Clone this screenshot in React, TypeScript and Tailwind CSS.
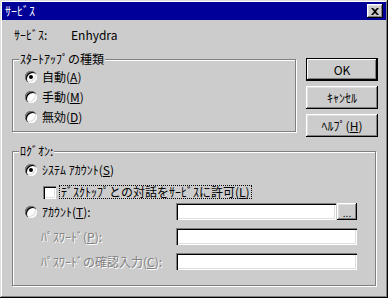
const sunken =
  'shadow-[inset_1px_1px_#808080,inset_2px_2px_#000,inset_-1px_-1px_#fff,inset_-2px_-2px_#dfdfdf]';
const raised =
  'shadow-[inset_-1px_-1px_#000,inset_1px_1px_#fff,inset_-2px_-2px_#808080,inset_2px_2px_#dfdfdf]';

function Radio({ checked }: { checked?: boolean }) {
  return (
    <span
      className={`relative flex w-[12px] h-[12px] shrink-0 items-center justify-center rounded-full bg-white ${sunken}`}
    >
      {checked && <span className="w-[4px] h-[4px] rounded-full bg-black" />}
    </span>
  );
}

function Button({ children, isDefault }: { children: React.ReactNode; isDefault?: boolean }) {
  return (
    <div
      className={`flex w-[72px] h-[23px] items-center justify-center bg-[#cccccc] ${
        isDefault
          ? 'border border-black shadow-[inset_-1px_-1px_#000,inset_1px_1px_#fff,inset_-2px_-2px_#808080]'
          : raised
      }`}
    >
      {children}
    </div>
  );
}

function GroupBox({
  title,
  className,
  children,
}: {
  title: string;
  className: string;
  children: React.ReactNode;
}) {
  return (
    <div
      className={`relative border border-[#808080] shadow-[inset_1px_1px_#fff,1px_1px_#fff] ${className}`}
    >
      <span className="absolute left-[6px] top-[-8px] px-[1px] bg-[#cccccc] leading-[14px]">
        {title}
      </span>
      {children}
    </div>
  );
}

const disabled = 'text-[#808080] [text-shadow:1px_1px_0_#fff]';

export default function App() {
  return (
    <div className="w-[388px] h-[298px] p-[2px] bg-[#cccccc] text-[12px] text-black font-['Noto_Sans_CJK_JP','Liberation_Sans',sans-serif] shadow-[inset_-1px_-1px_#000,inset_1px_1px_#dfdfdf,inset_-2px_-2px_#808080,inset_2px_2px_#fff] flex flex-col">
      {/* title bar */}
      <div className="h-[18px] bg-[#000099] flex items-center justify-between pl-[3px] pr-[3px]">
        <span className="text-white leading-[14px]">ｻｰﾋﾞｽ</span>
        <div className={`flex w-[16px] h-[14px] items-center justify-center bg-[#cccccc] ${raised}`}>
          <svg width="8" height="7" viewBox="0 0 8 7">
            <path d="M0 0h2l2 2 2-2h2L5 3.5 8 7H6L4 5 2 7H0l3-3.5z" fill="#000" />
          </svg>
        </div>
      </div>

      <div className="flex flex-col pl-[10px]">
        <div className="mt-[8px] ml-[2px] flex h-[14px] leading-[14px]">
          <span className="w-[57px]">ｻｰﾋﾞｽ:</span>
          <span>Enhydra</span>
        </div>

        <div className="mt-[16px] flex items-start">
          <GroupBox title="ｽﾀｰﾄｱｯﾌﾟの種類" className="mt-[1px] w-[284px] h-[73px]">
            <div className="flex flex-col pt-[7px] pl-[12px]">
              {[
                ['自動', 'A', true],
                ['手動', 'M', false],
                ['無効', 'D', false],
              ].map(([label, key, on]) => (
                <label key={key as string} className="flex h-[20px] items-center gap-[5px]">
                  <Radio checked={on as boolean} />
                  <span className="leading-[14px]">
                    {label}(<u>{key}</u>)
                  </span>
                </label>
              ))}
            </div>
          </GroupBox>

          <div className="ml-[10px] flex flex-col gap-[5px]">
            <Button isDefault>OK</Button>
            <Button>ｷｬﾝｾﾙ</Button>
            <Button>
              ﾍﾙﾌﾟ(<u>H</u>)
            </Button>
          </div>
        </div>

        <GroupBox title="ﾛｸﾞｵﾝ:" className="mt-[14px] w-[364px] h-[135px]">
          <div className="flex flex-col pt-[8px] pl-[12px]">
            <label className="flex h-[20px] items-center gap-[5px]">
              <Radio checked />
              <span className="leading-[14px]">
                ｼｽﾃﾑ ｱｶｳﾝﾄ(<u>S</u>)
              </span>
            </label>

            <label className="mt-[5px] ml-[18px] flex h-[14px] items-center gap-[3px]">
              <span className={`w-[13px] h-[13px] bg-white ${sunken}`} />
              <span className="border border-dotted border-black px-[1px] leading-[12px]">
                ﾃﾞｽｸﾄｯﾌﾟとの対話をｻｰﾋﾞｽに許可(<u>L</u>)
              </span>
            </label>

            <div className="mt-[4px] flex items-center">
              <label className="flex w-[151px] items-center gap-[5px]">
                <Radio />
                <span className="leading-[14px]">
                  ｱｶｳﾝﾄ(<u>T</u>):
                </span>
              </label>
              <div className={`w-[160px] h-[17px] bg-white ${sunken}`} />
              <div
                className={`ml-[1px] flex w-[20px] h-[17px] items-end justify-center pb-[3px] bg-[#cccccc] text-[10px] leading-[8px] ${raised}`}
              >
                ...
              </div>
            </div>

            <div className="mt-[8px] flex items-center">
              <span className={`w-[151px] pl-[16px] leading-[14px] ${disabled}`}>
                ﾊﾟｽﾜｰﾄﾞ(<u>P</u>):
              </span>
              <div className={`w-[181px] h-[17px] bg-white ${sunken}`} />
            </div>

            <div className="mt-[8px] flex items-center">
              <span className={`w-[151px] pl-[16px] leading-[14px] whitespace-nowrap ${disabled}`}>
                ﾊﾟｽﾜｰﾄﾞの確認入力(<u>C</u>):
              </span>
              <div className={`w-[181px] h-[17px] bg-white ${sunken}`} />
            </div>
          </div>
        </GroupBox>
      </div>
    </div>
  );
}
